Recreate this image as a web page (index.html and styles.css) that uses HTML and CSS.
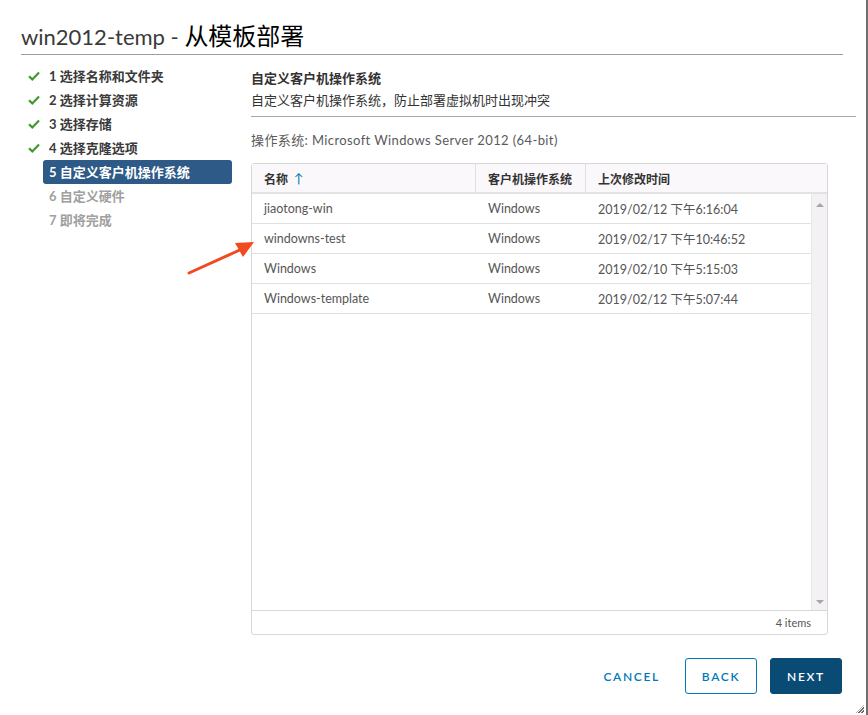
FILE: index.html
```html
<!DOCTYPE html>
<html lang="zh-CN">
<head>
<meta charset="utf-8">
<title>win2012-temp - 从模板部署</title>
<link rel="stylesheet" href="styles.css">
</head>
<body>
<div class="dialog">
  <header class="dlg-header">
    <h1 class="title">win2012-temp - <span class="title-cn">从模板部署</span></h1>
  </header>
  <div class="dlg-body">
    <nav class="steps">
      <div class="step done"><span class="chk"><svg width="12" height="10" viewBox="0 0 12 10"><path d="M1 5.2 L4.3 8.4 L11 1.5" fill="none" stroke="#3f9a2a" stroke-width="2.2"/></svg></span><span class="label">1 选择名称和文件夹</span></div>
      <div class="step done"><span class="chk"><svg width="12" height="10" viewBox="0 0 12 10"><path d="M1 5.2 L4.3 8.4 L11 1.5" fill="none" stroke="#3f9a2a" stroke-width="2.2"/></svg></span><span class="label">2 选择计算资源</span></div>
      <div class="step done"><span class="chk"><svg width="12" height="10" viewBox="0 0 12 10"><path d="M1 5.2 L4.3 8.4 L11 1.5" fill="none" stroke="#3f9a2a" stroke-width="2.2"/></svg></span><span class="label">3 选择存储</span></div>
      <div class="step done"><span class="chk"><svg width="12" height="10" viewBox="0 0 12 10"><path d="M1 5.2 L4.3 8.4 L11 1.5" fill="none" stroke="#3f9a2a" stroke-width="2.2"/></svg></span><span class="label">4 选择克隆选项</span></div>
      <div class="step active"><span class="chk"></span><span class="label">5 自定义客户机操作系统</span></div>
      <div class="step todo"><span class="chk"></span><span class="label">6 自定义硬件</span></div>
      <div class="step todo"><span class="chk"></span><span class="label">7 即将完成</span></div>
    </nav>
    <main class="content">
      <div class="sec-head">
        <div class="sec-title">自定义客户机操作系统</div>
        <div class="sec-sub">自定义客户机操作系统，防止部署虚拟机时出现冲突</div>
      </div>
      <div class="os-line">操作系统: Microsoft Windows Server 2012 (64-bit)</div>
      <div class="grid">
        <div class="grid-head">
          <div class="th c1">名称 <span class="sort">↑</span></div>
          <div class="th c2">客户机操作系统</div>
          <div class="th c3">上次修改时间</div>
          <div class="th-pad"></div>
        </div>
        <div class="grid-body">
          <div class="rows">
            <div class="row"><div class="td c1">jiaotong-win</div><div class="td c2">Windows</div><div class="td c3">2019/02/12 下午6:16:04</div></div>
            <div class="row"><div class="td c1">windowns-test</div><div class="td c2">Windows</div><div class="td c3">2019/02/17 下午10:46:52</div></div>
            <div class="row"><div class="td c1">Windows</div><div class="td c2">Windows</div><div class="td c3">2019/02/10 下午5:15:03</div></div>
            <div class="row"><div class="td c1">Windows-template</div><div class="td c2">Windows</div><div class="td c3">2019/02/12 下午5:07:44</div></div>
          </div>
          <div class="scrollbar">
            <span class="sb-up"></span>
            <span class="sb-down"></span>
          </div>
        </div>
        <div class="grid-foot">4 items</div>
      </div>
    </main>
  </div>
  <footer class="dlg-footer">
    <button class="btn btn-link">CANCEL</button>
    <button class="btn btn-outline">BACK</button>
    <button class="btn btn-primary">NEXT</button>
  </footer>
  <svg class="pointer" width="80" height="50" viewBox="0 0 80 50">
    <path d="M7 47 L60 23" stroke="#f04a1e" stroke-width="3" stroke-linecap="round"/>
    <path d="M72 16 L53 17 L61 31 Z" fill="#f04a1e"/>
  </svg>
  <span class="resize"></span>
</div>
</body>
</html>
```

FILE: styles.css
```css
* { box-sizing: border-box; }
html, body { margin: 0; padding: 0; background: #fff; }
body {
  font-family: Lato, "Noto Sans CJK SC", sans-serif;
  color: #333;
}
.dialog {
  position: relative;
  width: 868px;
  height: 715px;
  border-right: 2px solid #6f6f6f;
  display: flex;
  flex-direction: column;
}
.dlg-header {
  margin: 0 23px 0 21px;
  padding-top: 20px;
  height: 55px;
  border-bottom: 1px solid #9c9c9c;
}
.title {
  margin: 0;
  font-size: 22px;
  font-weight: 400;
  line-height: 30px;
  color: #3a3a3a;
}
.title-cn { color: #000; font-family: "Noto Sans CJK SC", sans-serif; font-weight: 400; font-size: 24px; }

.dlg-body {
  flex: 1;
  display: flex;
  min-height: 0;
}
.steps {
  width: 204px;
  margin-left: 28px;
  padding-top: 9px;
  display: flex;
  flex-direction: column;
}
.step {
  display: flex;
  align-items: center;
  height: 24px;
  font-size: 13px;
  font-weight: 700;
}
.chk { width: 15px; display: flex; align-items: center; }
.label {
  flex: 1;
  height: 24px;
  line-height: 24px;
  padding-left: 6px;
  border-radius: 3px;
}
.done .label { color: #3a3a3a; }
.active .label { background: #2d5a86; color: #fff; }
.todo .label { color: #a0a0a0; }

.content {
  margin-left: 19px;
  width: 605px;
  display: flex;
  flex-direction: column;
}
.sec-head {
  padding-top: 14px;
  padding-bottom: 7px;
  border-bottom: 1px solid #a8a8a8;
}
.sec-title {
  font-size: 13px;
  font-weight: 700;
  line-height: 18px;
  color: #333;
}
.sec-sub {
  font-size: 13px;
  line-height: 18px;
  margin-top: 4px;
  color: #333;
}
.os-line {
  margin-top: 14px;
  font-size: 13px;
  line-height: 18px;
  color: #5a5a5a;
  letter-spacing: 0.03em;
}
.grid {
  margin-top: 14px;
  width: 577px;
  height: 472px;
  border: 1px solid #d8d8d8;
  border-radius: 3px;
  display: flex;
  flex-direction: column;
  font-size: 12.5px;
}
.grid-head {
  display: flex;
  height: 30px;
  flex: none;
  background: #fbf8fc;
  border-bottom: 2px solid #e2e2e2;
}
.th {
  display: flex;
  align-items: center;
  padding-left: 12px;
  font-weight: 700;
  font-size: 12px;
  color: #333;
  border-right: 1px solid #e0e0e0;
}
.th-pad { flex: 1; }
.sort { color: #0079b8; font-weight: 400; margin-left: 6px; font-size: 13px; }
.c1 { width: 224px; }
.c2 { width: 110px; }
.c3 { width: 225px; border-right: none; }
.grid-body {
  flex: 1;
  display: flex;
  min-height: 0;
}
.rows { flex: 1; }
.row {
  display: flex;
  height: 30px;
  border-bottom: 1px solid #e1e1e1;
  color: #565656;
}
.td {
  display: flex;
  align-items: center;
  padding-left: 12px;
}
.scrollbar {
  width: 18px;
  background: #f4f1f5;
  border-left: 1px solid #ebe8ec;
  display: flex;
  flex-direction: column;
  justify-content: space-between;
  align-items: center;
  padding: 9px 0 6px;
}
.sb-up, .sb-down {
  width: 0; height: 0;
  border-left: 4px solid transparent;
  border-right: 4px solid transparent;
}
.sb-up { border-bottom: 4px solid #a5a5a5; }
.sb-down { border-top: 4px solid #a5a5a5; }
.grid-foot {
  height: 24px;
  flex: none;
  border-top: 1px solid #d8d8d8;
  display: flex;
  align-items: center;
  justify-content: flex-end;
  padding-right: 16px;
  font-size: 11px;
  color: #565656;
}

.dlg-footer {
  height: 80px;
  display: flex;
  justify-content: flex-end;
  align-items: flex-start;
  padding-top: 23px;
  padding-right: 24px;
  gap: 13px;
}
.btn {
  height: 36px;
  min-width: 72px;
  padding: 0 12px;
  border-radius: 3px;
  font-family: Lato, sans-serif;
  font-size: 12px;
  font-weight: 600;
  letter-spacing: 0.14em;
  cursor: pointer;
}
.btn-link { background: none; border: none; color: #0079b8; }
.btn-outline { background: #fff; border: 1px solid #0079b8; color: #0079b8; }
.btn-primary { background: #0a4b75; border: 1px solid #0a4b75; color: #fff; }

.pointer { position: absolute; left: 182px; top: 226px; }
.resize {
  position: absolute;
  right: 2px;
  bottom: 2px;
  width: 8px;
  height: 8px;
  background: repeating-linear-gradient(135deg, transparent 0 1px, #666 1px 2px);
  clip-path: polygon(100% 0, 100% 100%, 0 100%);
}
```
